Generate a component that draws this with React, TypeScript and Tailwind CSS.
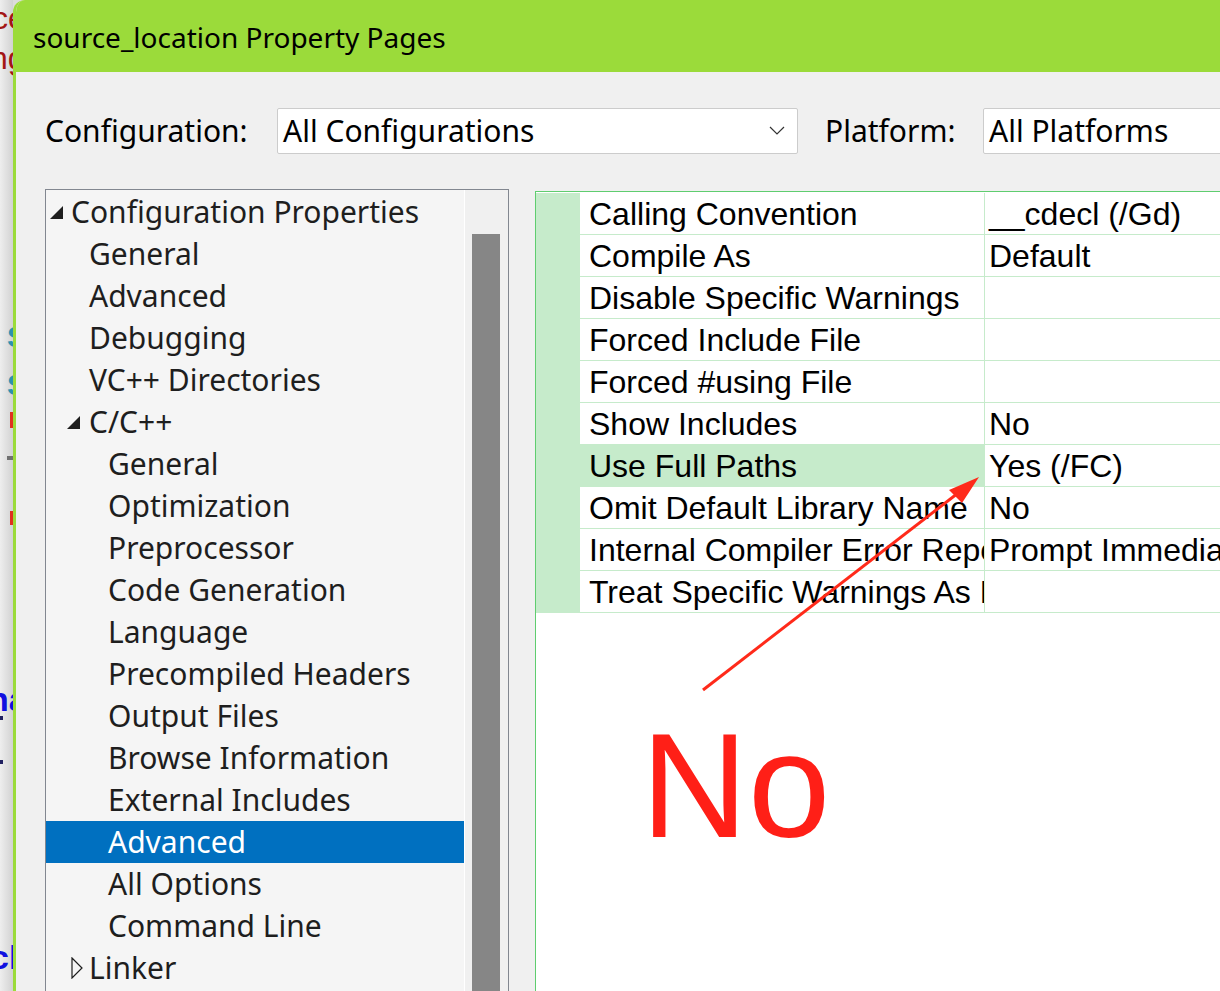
import React from "react";

const treeItems: { label: string; level: number; icon?: "open" | "closed"; selected?: boolean }[] = [
  { label: "Configuration Properties", level: 0, icon: "open" },
  { label: "General", level: 1 },
  { label: "Advanced", level: 1 },
  { label: "Debugging", level: 1 },
  { label: "VC++ Directories", level: 1 },
  { label: "C/C++", level: 1, icon: "open" },
  { label: "General", level: 2 },
  { label: "Optimization", level: 2 },
  { label: "Preprocessor", level: 2 },
  { label: "Code Generation", level: 2 },
  { label: "Language", level: 2 },
  { label: "Precompiled Headers", level: 2 },
  { label: "Output Files", level: 2 },
  { label: "Browse Information", level: 2 },
  { label: "External Includes", level: 2 },
  { label: "Advanced", level: 2, selected: true },
  { label: "All Options", level: 2 },
  { label: "Command Line", level: 2 },
  { label: "Linker", level: 1, icon: "closed" },
];

const rows: { name: string; value: string; selected?: boolean }[] = [
  { name: "Calling Convention", value: "__cdecl (/Gd)" },
  { name: "Compile As", value: "Default" },
  { name: "Disable Specific Warnings", value: "" },
  { name: "Forced Include File", value: "" },
  { name: "Forced #using File", value: "" },
  { name: "Show Includes", value: "No" },
  { name: "Use Full Paths", value: "Yes (/FC)", selected: true },
  { name: "Omit Default Library Name", value: "No" },
  { name: "Internal Compiler Error Reporting", value: "Prompt Immediately" },
  { name: "Treat Specific Warnings As Errors", value: "" },
];

function OpenTri() {
  return (
    <svg width="13" height="13" viewBox="0 0 13 13" className="shrink-0">
      <polygon points="0,13 13,13 13,0" fill="#1e1e1e" />
    </svg>
  );
}
function ClosedTri() {
  return (
    <svg width="12" height="22" viewBox="0 0 12 22" className="shrink-0">
      <polygon points="1,1 11,11 1,21" fill="none" stroke="#1e1e1e" strokeWidth="1.2" />
    </svg>
  );
}

export default function App() {
  const ui = { fontFamily: '"Noto Sans", "Open Sans", sans-serif' };
  const grid = { fontFamily: '"Liberation Sans", Arial, sans-serif' };
  return (
    <div className="relative flex w-[1220px] h-[991px] overflow-hidden bg-[#dcdcdc]">
      {/* background window strip */}
      <div className="relative w-[13px] shrink-0 overflow-hidden bg-gradient-to-r from-[#eeeeee] to-[#d2d2d2]" style={grid}>
        <div className="absolute left-[-8px] top-[-6px] text-[32px] text-[#a31515]">ce</div>
        <div className="absolute left-[-10px] top-[34px] text-[32px] text-[#a31515]">ng</div>
        <div className="absolute left-[7px] top-[314px] text-[30px] font-bold text-[#2b91af]">S</div>
        <div className="absolute left-[7px] top-[362px] text-[30px] font-bold text-[#2b91af]">S</div>
        <div className="absolute left-[10px] top-[412px] w-[3px] h-[16px] bg-[#e03020]" />
        <div className="absolute left-[7px] top-[456px] w-[6px] h-[4px] bg-[#707070]" />
        <div className="absolute left-[10px] top-[511px] w-[3px] h-[14px] bg-[#e03020]" />
        <div className="absolute left-[-12px] top-[674px] text-[34px] font-bold text-[#1010e0]">na</div>
        <div className="absolute left-[0px] top-[716px] w-[3px] h-[4px] bg-[#202060]" />
        <div className="absolute left-[0px] top-[760px] w-[3px] h-[4px] bg-[#202060]" />
        <div className="absolute left-[-10px] top-[932px] text-[34px] font-bold text-[#1010e0]">cl</div>
      </div>

      {/* dialog */}
      <div className="flex-1 flex flex-col border-l-[3px] border-[#9bdb3a] rounded-tl-[12px] overflow-hidden bg-[#f0f0f0]" style={ui}>
        <div className="h-[72px] shrink-0 bg-[#9bdb3a] flex items-center pl-[17px] pt-[2px] text-[28px] text-black">
          source_location Property Pages
        </div>

        <div className="flex-1 flex flex-col pl-[29px] pt-[36px] min-h-0">
          {/* config row */}
          <div className="flex items-center h-[46px] text-[30px] text-black">
            <div className="w-[232px] shrink-0 pb-[1px]">Configuration:</div>
            <div className="w-[521px] h-[46px] shrink-0 bg-white border border-[#cccccc] rounded-[2px] flex items-center pl-[5px] pr-[12px]">
              <span className="flex-1 pb-[1px]">All Configurations</span>
              <svg width="16" height="10" viewBox="0 0 16 10">
                <polyline points="1,1 8,8 15,1" fill="none" stroke="#333" strokeWidth="1.2" />
              </svg>
            </div>
            <div className="w-[185px] shrink-0 pl-[27px] pb-[1px]">Platform:</div>
            <div className="w-[400px] h-[46px] shrink-0 bg-white border border-[#cccccc] rounded-[2px] flex items-center pl-[5px]">
              <span className="pb-[1px]">All Platforms</span>
            </div>
          </div>

          {/* main area */}
          <div className="flex flex-1 mt-[35px] min-h-0">
            {/* tree */}
            <div className="w-[464px] shrink-0 border-t border-l border-r border-[#828790] bg-[#f5f5f5] flex">
              <div className="w-[418px] shrink-0 pt-[1px] text-[30px] text-[#1e1e1e]">
                {treeItems.map((it, i) => (
                  <div
                    key={i}
                    className={
                      "h-[42px] flex items-center whitespace-nowrap " +
                      (it.selected ? "bg-[#0070c0] text-white" : "")
                    }
                  >
                    {it.level === 0 && (
                      <div className="flex items-center pl-[4px]">
                        <OpenTri />
                        <span className="pl-[8px] pb-[1px]">{it.label}</span>
                      </div>
                    )}
                    {it.level === 1 && (
                      <div className="flex items-center">
                        <div className="w-[43px] flex justify-end items-center">
                          {it.icon === "open" && <div className="pr-[9px] flex"><OpenTri /></div>}
                          {it.icon === "closed" && <div className="pr-[6px] flex"><ClosedTri /></div>}
                        </div>
                        <span className="pb-[1px]">{it.label}</span>
                      </div>
                    )}
                    {it.level === 2 && <span className="pl-[62px] pb-[1px]">{it.label}</span>}
                  </div>
                ))}
              </div>
              <div className="w-px bg-white shrink-0" />
              <div className="flex-1 bg-[#f0f0f0] pl-[7px] pr-[8px] pt-[44px] flex">
                <div className="w-[28px] bg-[#868686]" />
              </div>
            </div>

            {/* property grid */}
            <div className="ml-[26px] mt-[2px] flex-1 flex flex-col border-t border-l border-[#5fcd6f] bg-white min-w-0" style={grid}>
              <div className="pt-[1px] text-[32px] text-black">
                {rows.map((r, i) => (
                  <div key={i} className="flex h-[42px]">
                    <div className="w-[44px] shrink-0 bg-[#c6ebcb]" />
                    <div
                      className={
                        "w-[405px] shrink-0 border-b border-r border-[#c6ebcb] pl-[9px] overflow-hidden whitespace-nowrap flex items-center " +
                        (r.selected ? "bg-[#c6ebcb]" : "bg-white")
                      }
                    >
                      {r.name}
                    </div>
                    <div className="flex-1 border-b border-[#c6ebcb] pl-[4px] overflow-hidden whitespace-nowrap flex items-center">
                      {r.value}
                    </div>
                  </div>
                ))}
              </div>
            </div>
          </div>
        </div>
      </div>

      {/* annotation overlay */}
      <svg className="absolute left-0 top-0 pointer-events-none" width="1220" height="991" viewBox="0 0 1220 991">
        <line x1="703" y1="690" x2="962" y2="490" stroke="#ff2a1a" strokeWidth="3" />
        <polygon points="979,477 949,490 962,503" fill="#ff2a1a" />
      </svg>
      <div
        className="absolute left-[641px] top-[701px] text-[148px] leading-[1.15] text-[#ff1f17]"
        style={grid}
      >
        No
      </div>
    </div>
  );
}
